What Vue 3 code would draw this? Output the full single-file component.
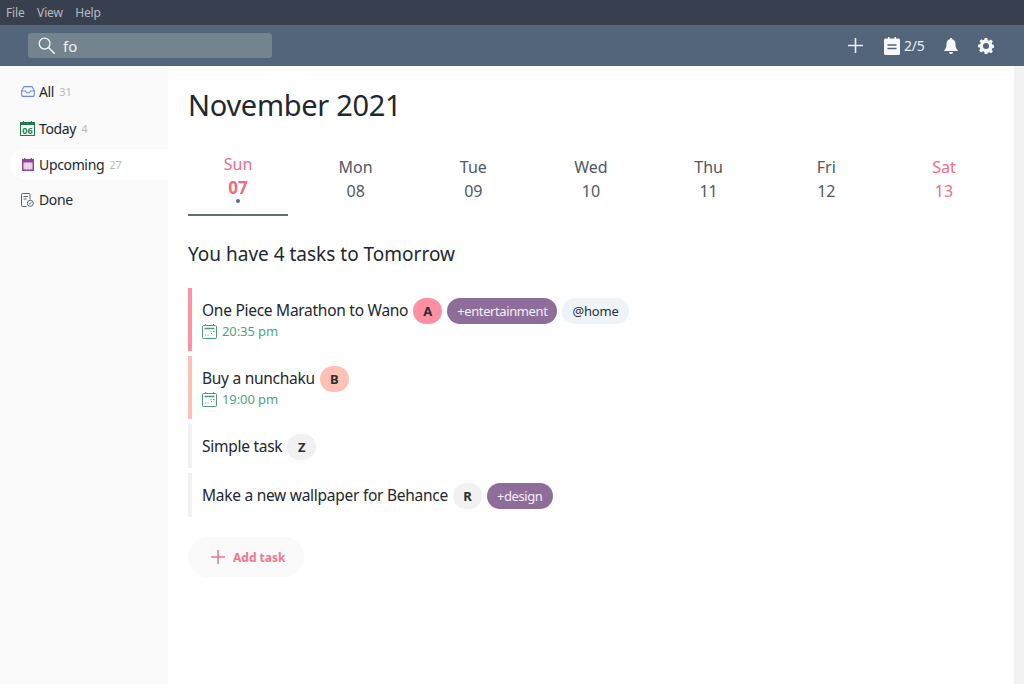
<script setup>
const nav = [
  { label: 'All', count: '31', icon: 'all' },
  { label: 'Today', count: '4', icon: 'today' },
  { label: 'Upcoming', count: '27', icon: 'upcoming', active: true },
  { label: 'Done', count: '', icon: 'done' }
]
const days = [
  { n: 'Sun', d: '07', cls: 'current' },
  { n: 'Mon', d: '08' },
  { n: 'Tue', d: '09' },
  { n: 'Wed', d: '10' },
  { n: 'Thu', d: '11' },
  { n: 'Fri', d: '12' },
  { n: 'Sat', d: '13', cls: 'sat' }
]
const tasks = [
  { title: 'One Piece Marathon to Wano', p: 'A', cls: 'a', time: '20:35 pm', tags: [{ t: '+entertainment', k: 'project' }, { t: '@home', k: 'context' }] },
  { title: 'Buy a nunchaku', p: 'B', cls: 'b', time: '19:00 pm', tags: [] },
  { title: 'Simple task', p: 'Z', cls: 'n', tags: [] },
  { title: 'Make a new wallpaper for Behance', p: 'R', cls: 'n', tags: [{ t: '+design', k: 'project' }] }
]
</script>

<template>
  <div class="app">
    <div class="menubar">
      <span>File</span><span>View</span><span>Help</span>
    </div>
    <header class="toolbar">
      <div class="search">
        <svg class="search-icon" width="17" height="17" viewBox="0 0 17 17" fill="none" stroke="#f2f5f7" stroke-width="1.3"><circle cx="6.600" cy="6.600" r="5.400"/><path d="M10.500 10.500l5.700 5.700" stroke-width="1.600" stroke-linecap="round"/></svg>
        <span class="query">fo</span>
      </div>
      <div class="actions">
        <svg class="act-plus" width="15" height="15" viewBox="0 0 15 15" stroke="#eef1f4" stroke-width="1.600" fill="none"><path d="M7.500 0v15M0 7.500h15"/></svg>
        <div class="goal">
          <svg width="16" height="18" viewBox="0 0 16 18"><path fill="#f5f7f8" d="M1.500 1.500h2.500V0h1.500v1.500h5V0H12v1.500h2.500A1.500 1.500 0 0 1 16 3v13.500a1.500 1.500 0 0 1-1.500 1.500h-13A1.500 1.500 0 0 1 0 16.500V3a1.500 1.500 0 0 1 1.500-1.500z"/><path stroke="#52657a" stroke-width="1.700" d="M3.500 8h9M3.500 11.500h9"/></svg>
          <span>2/5</span>
        </div>
        <svg class="act-bell" width="14" height="16" viewBox="0 0 14 16"><path fill="#f5f7f8" d="M7 0c.7 0 1.200.5 1.200 1.200 2.300.5 3.300 2.400 3.300 4.800 0 3.400.7 4.600 2.200 6.200.3.400.1 .9-.4.9H.7c-.5 0-.7-.5-.4-.9C1.800 10.600 2.500 9.400 2.500 6c0-2.400 1-4.300 3.300-4.800C5.800.5 6.300 0 7 0zM5 14h4a2 2 0 0 1-2 2 2 2 0 0 1-2-2z"/></svg>
        <svg class="act-gear" width="16" height="16" viewBox="0 0 24 24"><path fill="#f5f7f8" fill-rule="evenodd" d="M10 0h4l.7 3.200 2 .8L19.500 2.300l2.800 2.800-1.700 2.800.8 2 3.200.7v4l-3.200.7-.8 2 1.700 2.800-2.800 2.800-2.800-1.700-2 .8L14 24h-4l-.7-3.200-2-.8-2.800 1.700-2.800-2.800 1.700-2.800-.8-2L0 14v-4l3.200-.7.8-2-1.700-2.800 2.800-2.800L7.300 3.400l2-.8zM12 7.500a4.500 4.500 0 1 0 0 9 4.500 4.500 0 0 0 0-9z"/></svg>
      </div>
    </header>
    <div class="body">
      <aside class="sidebar">
        <div v-for="item in nav" :key="item.label" class="nav-item" :class="{ active: item.active }">
          <span class="nav-icon">
            <svg v-if="item.icon === 'all'" width="14" height="11" viewBox="0 0 14 11" fill="none" stroke="#6a8cf0" stroke-width="1.100"><path d="M3 .6h8l2.400 4.400v3.400a2 2 0 0 1-2 2H2.600a2 2 0 0 1-2-2V5z"/><path d="M.6 5h4l1 1.700h2.800l1-1.700h4"/></svg>
            <svg v-else-if="item.icon === 'today'" width="15" height="15" viewBox="0 0 15 15" fill="none"><rect x=".5" y="1.500" width="14" height="13" fill="#fff" stroke="#1a7d4b"/><rect x=".5" y="1.500" width="14" height="2.500" fill="#1a7d4b"/><path d="M3.500 0v2M11.500 0v2" stroke="#1a7d4b"/><text x="7.500" y="12.500" text-anchor="middle" class="icon-num">06</text></svg>
            <svg v-else-if="item.icon === 'upcoming'" width="12" height="13" viewBox="0 0 12 13"><rect x="0" y="1" width="12" height="12" fill="#98439a"/><rect x="1.500" y="4.500" width="9" height="7" fill="#e4cce2"/><path d="M2.700 0v3M9.300 0v3" stroke="#98439a" stroke-width="1.400"/><path d="M4.500 4.500v7M7.500 4.500v7M1.500 8h9" stroke="#f3e6f2" stroke-width=".6"/></svg>
            <svg v-else width="13" height="14" viewBox="0 0 13 14" fill="none" stroke="#596270" stroke-width="1"><path d="M5.500 13.500H1.500a1 1 0 0 1-1-1V1.500a1 1 0 0 1 1-1h6.500a1 1 0 0 1 1 1V6.500"/><path d="M2.500 3.500h4.500M2.500 6h3"/><circle cx="9.300" cy="10.300" r="3"/><path d="M8 11.200l2.500-1.800"/></svg>
          </span>
          <span class="nav-label">{{ item.label }}</span>
          <span v-if="item.count" class="nav-count">{{ item.count }}</span>
        </div>
      </aside>
      <main class="main">
        <h1>November 2021</h1>
        <div class="week">
          <div v-for="day in days" :key="day.d" class="day" :class="day.cls">
            <div class="day-name">{{ day.n }}</div>
            <div class="day-num">{{ day.d }}</div>
            <i v-if="day.cls === 'current'" class="dot"></i>
          </div>
        </div>
        <h2>You have 4 tasks to Tomorrow</h2>
        <div class="tasks">
          <div v-for="task in tasks" :key="task.title" class="task" :class="['task-' + task.cls, { timed: task.time }]">
            <div class="task-line">
              <span class="task-title">{{ task.title }}</span>
              <span class="priority" :class="task.cls">{{ task.p }}</span>
              <span v-for="tag in task.tags" :key="tag.t" class="tag" :class="tag.k">{{ tag.t }}</span>
            </div>
            <div v-if="task.time" class="task-time">
              <svg width="15" height="15" viewBox="0 0 15 15" fill="none" stroke="#4a9c78"><rect x=".5" y="1.500" width="14" height="13" rx="1"/><path d="M3.500 0v2M11.500 0v2"/><path d="M2.500 4.500h10" stroke-width="1.500"/><path d="M8.500 7.500h1M11 7.500h1.500M3 11h1M5.500 11h1M9 9.500h1"/></svg>
              <span>{{ task.time }}</span>
            </div>
          </div>
        </div>
        <button class="add" type="button">
          <svg width="14" height="14" viewBox="0 0 14 14" stroke="#f4758f" stroke-width="1.600"><path d="M7 0v14M0 7h14"/></svg>
          <span>Add task</span>
        </button>
      </main>
      <div class="scroll"></div>
    </div>
  </div>
</template>

<style>
html, body { margin: 0; background: #fff; }
</style>

<style scoped>
.app { width: 1024px; height: 684px; display: flex; flex-direction: column; overflow: hidden; font-family: "Noto Sans", sans-serif; color: #22282f; }
.menubar { height: 25px; background: #383f4f; color: #b6bbc4; font-size: 12px; letter-spacing: -0.15px; display: flex; align-items: center; gap: 12.500px; padding-left: 6px; box-sizing: border-box; flex: none; }
.toolbar { height: 41px; background: #52657a; display: flex; align-items: center; justify-content: space-between; flex: none; padding: 0 30px 0 28px; }
.search { width: 244px; height: 25px; background: #74848f; border-radius: 3px; display: flex; align-items: center; padding-left: 10px; box-sizing: border-box; gap: 8px; }
.query { color: #eef3f6; font-size: 15px; }
.actions { display: flex; align-items: center; }
.goal { display: flex; align-items: center; gap: 4px; color: #e6eef4; font-size: 14px; letter-spacing: -0.2px; margin-left: 21px; width: 41px; }
.act-bell { margin-left: 19px; }
.act-gear { margin-left: 20px; }
.body { flex: 1; display: flex; min-height: 0; }
.sidebar { width: 168px; background: #fafafa; padding-top: 8px; box-sizing: border-box; flex: none; }
.nav-item { height: 35px; display: flex; align-items: center; padding-left: 20px; font-size: 14px; letter-spacing: -0.35px; gap: 4px; box-sizing: border-box; }
.nav-item:first-child { margin-bottom: 2px; }
.nav-item.active { margin-left: 10px; padding-left: 10px; background: #fff; border-radius: 16px 0 0 16px; height: 31px; margin-top: 3px; margin-bottom: 2px; }
.nav-icon { width: 15px; display: flex; justify-content: center; flex: none; }
.nav-label { color: #22282f; }
.nav-count { color: #b9b9b9; font-size: 11px; letter-spacing: 0; margin-left: 1px; }
.icon-num { font: 700 9px "Noto Sans", sans-serif; letter-spacing: 0; fill: #1a7d4b; }
.main { flex: 1; padding: 0 20px; min-width: 0; }
h1 { margin: 20px 0 0; font-size: 29px; letter-spacing: -0.3px; line-height: 38px; font-weight: 400; color: #22282f; }
.week { display: flex; justify-content: space-between; margin-top: 28px; }
.day { width: 100px; height: 64px; text-align: center; color: #4e5964; font-size: 16px; line-height: 24px; padding-top: 3px; box-sizing: border-box; position: relative; }
.day.current { padding-top: 0; border-bottom: 2px solid #5f6f80; height: 64px; color: #f06a85; }
.day.current .day-num { font-weight: 700; font-size: 17px; }
.day.sat { color: #f06a85; }
.dot { position: absolute; width: 4px; height: 4px; border-radius: 50%; background: #5f6f80; left: 48px; top: 47px; }
h2 { margin: 25px 0 0; font-size: 19px; line-height: 26px; font-weight: 400; color: #22282f; }
.tasks { margin-top: 21px; display: flex; flex-direction: column; gap: 5px; }
.task { border-left: 4px solid #f1f1f1; padding: 10px 0 0 10px; box-sizing: border-box; height: 44px; }
.task.timed { height: 63px; }
.task-a { border-left-color: #ff8fa3; }
.task-b { border-left-color: #ffc0b5; }
.task-line { display: flex; align-items: center; height: 26px; gap: 5px; }
.task-title { font-size: 15.500px; letter-spacing: -0.27px; line-height: 24px; margin-bottom: 2px; }
.priority { width: 29px; height: 26px; border-radius: 13px; background: #f1f1f1; font-size: 13px; font-weight: 700; display: flex; align-items: center; justify-content: center; color: #2d2d35; }
.priority.a { background: #ff8fa3; }
.priority.b { background: #ffc0b5; }
.tag { height: 26px; border-radius: 13px; padding: 0 10px; font-size: 13px; display: flex; align-items: center; box-sizing: border-box; }
.project { background: #8e6d9b; color: #f4eef6; letter-spacing: -0.4px; }
.context { background: #edf3f6; color: #2b3138; letter-spacing: -0.15px; }
.task-time { display: flex; align-items: center; gap: 5px; color: #4fa381; font-size: 13px; letter-spacing: -0.1px; height: 18px; margin-top: -2px; }
.add { margin-top: 20px; width: 116px; height: 40px; border: 0; border-radius: 20px; background: #fafafa; display: flex; align-items: center; gap: 8px; padding: 0 0 0 23px; color: #f4758f; font: 700 12px "Noto Sans", sans-serif; }
.scroll { width: 10px; background: #f2f2f2; flex: none; }
</style>
